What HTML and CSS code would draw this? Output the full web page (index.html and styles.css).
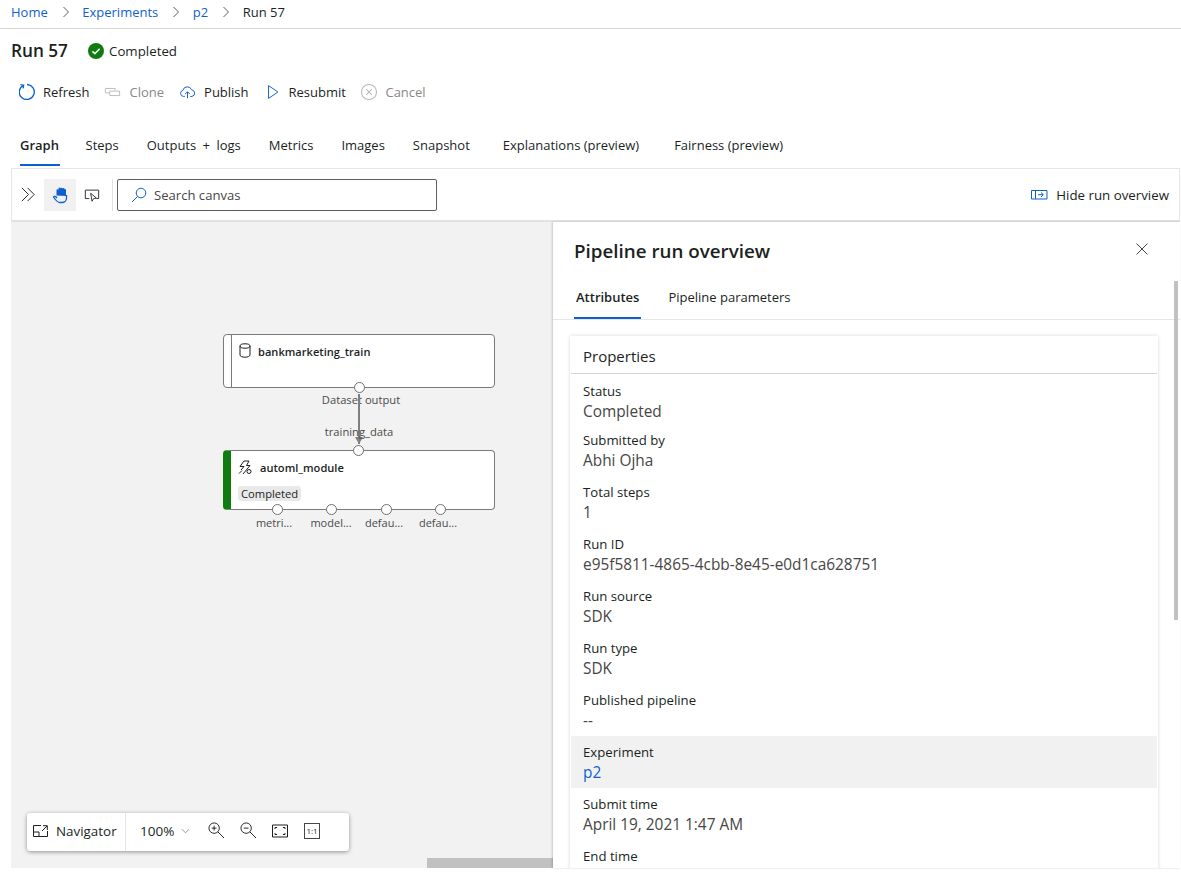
FILE: index.html
```html
<!DOCTYPE html>
<html lang="en">
<head>
<meta charset="utf-8">
<title>Run 57</title>
<link rel="stylesheet" href="styles.css">
</head>
<body>
<nav class="crumbs">
  <a class="link">Home</a>
  <svg class="chev" viewBox="0 0 8 12"><path d="M1.500 1l5 5-5 5"/></svg>
  <a class="link">Experiments</a>
  <svg class="chev" viewBox="0 0 8 12"><path d="M1.500 1l5 5-5 5"/></svg>
  <a class="link">p2</a>
  <svg class="chev" viewBox="0 0 8 12"><path d="M1.500 1l5 5-5 5"/></svg>
  <span>Run 57</span>
</nav>

<header class="title-row">
  <h1>Run 57</h1>
  <span class="status">
    <svg class="check" viewBox="0 0 16 16"><circle cx="8" cy="8" r="8"/><path d="M4.400 8.300l2.500 2.400 4.700-5"/></svg>
    Completed
  </span>
</header>

<div class="commands">
  <button class="cmd"><svg viewBox="1 1 16 16" class="ic blue thick"><path d="M5.400 2.300A7.500 7.500 0 1 0 9 1.500"/><path d="M2.400 1.700l3.300.5-.6 3.200"/></svg>Refresh</button>
  <button class="cmd off"><svg viewBox="0 0 18 18" class="ic ghost wide"><path d="M1 5h11v2M1 5v5h5M6 8h11v5H6z"/></svg>Clone</button>
  <button class="cmd"><svg viewBox="0 0 18 18" class="ic blue wide"><path d="M6 14H4.500a3.500 3.500 0 0 1-.6-6.900 5 5 0 0 1 9.600-.6 3.800 3.800 0 0 1 .5 7.500H12"/><path d="M9 16V9M6.500 11.200L9 8.700l2.500 2.500"/></svg>Publish</button>
  <button class="cmd"><svg viewBox="0 0 18 18" class="ic blue"><path d="M4 1.800v14.400L14.500 9z"/></svg>Resubmit</button>
  <button class="cmd off"><svg viewBox="1 1 16 16" class="ic ghost"><circle cx="9" cy="9" r="7.500"/><path d="M6.200 6.200l5.600 5.600M11.800 6.200l-5.600 5.600"/></svg>Cancel</button>
</div>

<div class="tabs">
  <a class="tab on">Graph</a>
  <a class="tab">Steps</a>
  <a class="tab spaced">Outputs + logs</a>
  <a class="tab">Metrics</a>
  <a class="tab">Images</a>
  <a class="tab">Snapshot</a>
  <a class="tab far">Explanations (preview)</a>
  <a class="tab farther">Fairness (preview)</a>
</div>

<main class="work">
  <div class="toolbar">
    <svg class="tool-ic expand" viewBox="0 0 18 18"><path d="M2 2l7 7-7 7M8 2l7 7-7 7"/></svg>
    <span class="hand"><svg viewBox="0 0 16 18"><path class="hand-fill" d="M4.500 9.500V4.500a1 1 0 0 1 2-.3V2.500a1 1 0 0 1 2 0 1 1 0 0 1 2 .3 1 1 0 0 1 2 .5 1 1 0 0 1 1.500.7V10z"/><path class="hand-line" d="M14.500 9v3a4.500 4.500 0 0 1-4.500 4.500H8C5.500 16.500 3.500 14 1.500 11c.8-1 2.200-.8 3.500 1"/></svg></span>
    <svg class="tool-ic select" viewBox="0 0 18 18"><path d="M6 13H1.500V3.500h15V13H14"/><path d="M7.500 7l1.500 9 2-3 3-.5z"/></svg>
    <span class="sep"></span>
    <label class="search">
      <svg viewBox="0 0 16 16"><circle cx="10" cy="6" r="4.800"/><path d="M6.500 9.500L1 15"/></svg>
      Search canvas
    </label>
    <button class="hide">
      <svg viewBox="0 0 17 10"><path class="hb" d="M.5.500h15.500v8.500H.5zM4.500.500v8.500"/><path class="hb" d="M7 4.700h5M10 2.500l2.300 2.200L10 7"/></svg>
      Hide run overview
    </button>
  </div>

  <div class="split">
    <section class="canvas">
      <div class="node data">
        <svg class="node-ic" viewBox="0 0 12 15"><ellipse cx="6" cy="3" rx="5" ry="2.200"/><path d="M1 3v9c0 1.300 2.200 2.200 5 2.200s5-.9 5-2.200V3"/></svg>
        <b>bankmarketing_train</b>
        <i class="port pd"></i>
      </div>
      <span class="plabel dataset">Dataset output</span>
      <span class="wire"></span>
      <span class="plabel training">training_data</span>

      <div class="node auto">
        <svg class="node-ic flash" viewBox="0 0 14 15"><path d="M6 1L2 6.500h4L3 10M6 1h5L8.500 5.500H12L5 14"/><circle cx="11" cy="11.500" r="2"/><path d="M1 13.500l3-3"/></svg>
        <b>automl_module</b>
        <span class="pill">Completed</span>
        <i class="port pa"></i>
        <i class="port p1"></i>
        <i class="port p2"></i>
        <i class="port p3"></i>
        <i class="port p4"></i>
      </div>
      <span class="plabel out o1">metri...</span>
      <span class="plabel out o2">model...</span>
      <span class="plabel out o3">defau...</span>
      <span class="plabel out o4">defau...</span>

      <div class="navbar">
        <span class="nav-left">
          <svg viewBox="0 0 15 12"><path d="M8 .5H.5v11h14V6M.5 7H6v4.500M9 6l5-5M10 .7h4.300V5"/></svg>
          Navigator
        </span>
        <span class="zoom-pct">100% <svg viewBox="0 0 10 6"><path d="M1 1l4 4 4-4"/></svg></span>
        <svg class="nz" viewBox="0 0 18 18"><circle cx="6.500" cy="6.500" r="5.500"/><path d="M10.500 10.500L17 17M4 6.500h5M6.500 4v5"/></svg>
        <svg class="nz" viewBox="0 0 18 18"><circle cx="6.500" cy="6.500" r="5.500"/><path d="M10.500 10.500L17 17M4 6.500h5"/></svg>
        <svg class="nz fit" viewBox="0 0 16 14"><path d="M.5 1h15v12H.5zM3 5V3.500h2M11 3.500h2V5M13 9v1.500h-2M5 10.500H3V9"/></svg>
        <span class="one">1:1</span>
      </div>
      <span class="hscroll"></span>
    </section>

    <aside class="panel">
      <div class="panel-head">
        <h2>Pipeline run overview</h2>
        <svg class="close" viewBox="0 0 12 12"><path d="M.5.500l11 11M11.500.500l-11 11"/></svg>
      </div>
      <div class="panel-tabs">
        <a class="ptab on">Attributes</a>
        <a class="ptab">Pipeline parameters</a>
      </div>
      <div class="card">
        <h3>Properties</h3>
        <dl class="props">
          <div class="prop first"><dt>Status</dt><dd>Completed</dd></div>
          <div class="prop"><dt>Submitted by</dt><dd>Abhi Ojha</dd></div>
          <div class="prop"><dt>Total steps</dt><dd>1</dd></div>
          <div class="prop"><dt>Run ID</dt><dd>e95f5811-4865-4cbb-8e45-e0d1ca628751</dd></div>
          <div class="prop"><dt>Run source</dt><dd>SDK</dd></div>
          <div class="prop"><dt>Run type</dt><dd>SDK</dd></div>
          <div class="prop"><dt>Published pipeline</dt><dd>--</dd></div>
          <div class="prop hl"><dt>Experiment</dt><dd class="link">p2</dd></div>
          <div class="prop"><dt>Submit time</dt><dd>April 19, 2021 1:47 AM</dd></div>
          <div class="prop"><dt>End time</dt></div>
        </dl>
      </div>
      <span class="vscroll"></span>
    </aside>
  </div>
</main>
</body>
</html>
```
FILE: styles.css
```css
* { box-sizing: border-box; }
html, body { margin: 0; height: 880px; overflow: hidden; background: #fff; }
body { font-family: "Open Sans", "Noto Sans", sans-serif; font-size: 13px; color: #201f1e; }
svg { fill: none; stroke: currentColor; flex: none; }
button { font: inherit; color: inherit; background: none; border: 0; padding: 0; display: flex; align-items: center; }
.link { color: #0f5fd0; }

.crumbs { height: 29px; border-bottom: 1px solid #d8d8d8; padding: 0 0 4px 11px; display: flex; align-items: center; }
.chev { width: 8px; height: 12px; color: #605e5c; margin: 0 12.500px 0 14px; stroke-width: 1; }

.title-row { height: 45px; padding: 0 0 2px 11px; display: flex; align-items: center; }
h1 { margin: 0; font-size: 17.200px; font-weight: 600; color: #201f1e; width: 77px; }
.status { display: flex; align-items: center; gap: 5px; font-size: 13.300px; }
.check { width: 16px; height: 16px; stroke: none; fill: #107c10; }
.check path { stroke: #fff; stroke-width: 1.600; fill: none; }

.commands { height: 36px; padding-left: 19px; display: flex; align-items: center; }
.cmd { margin-right: 15px; gap: 8px; white-space: nowrap; }
.cmd:nth-child(3) { margin-right: 16px; }
.cmd:last-child { gap: 8.500px; }
.cmd.off { color: #8a8886; }
.ic { width: 16px; height: 16px; stroke-width: 1.100; }
.ic.wide { width: 17px; }
.ic.thick { stroke-width: 1.300; }
.blue { color: #0f5fd0; }
.ghost { color: #bdbbb9; }

.tabs { height: 43px; padding-left: 20px; display: flex; gap: 28px; margin-top: 15px; }
.tab { height: 41px; padding: 11px 0 0; line-height: 18px; white-space: nowrap; }
.tab.on { font-weight: 600; border-bottom: 2px solid #0f5fd0; width: 40px; margin-right: -2.500px; }
.tab.spaced { word-spacing: 3px; }
.tab.far { margin-left: 5px; }
.tab.farther { margin-left: 7px; }

.work { margin: 0 1px 0 11px; }
.toolbar { height: 54px; border: 1px solid #e6e6e6; border-bottom: 2px solid #e2e2e2; display: flex; align-items: center; padding: 0 10px 0 8px; }
.tool-ic { width: 16px; height: 16px; stroke-width: 1; }
.expand { width: 17px; height: 17px; }
.hand { width: 32px; height: 32px; margin: 0 8px 0 7px; background: #f1f1f1; display: flex; align-items: center; justify-content: center; color: #0f5fd0; }
.hand svg { width: 16px; height: 18px; }
.hand-fill { fill: #0f5fd0; stroke: none; }
.hand-line { stroke-width: 1.300; }
.sep { width: 1px; height: 32px; background: #e1e1e1; margin: 0 4px 0 12px; }
.search { width: 320px; height: 32px; border: 1px solid #605e5c; border-radius: 2px; display: flex; align-items: center; gap: 7px; padding-left: 13px; color: #484644; font-size: 13.100px; }
.search svg { width: 16px; height: 16px; color: #0f5fd0; stroke-width: 1; }
.hide { margin-left: auto; gap: 8px; font-size: 13.300px; }
.hide svg { width: 17px; height: 10px; }
.hb { stroke: #0f5fd0; stroke-width: 1; }

.split { height: 646px; display: flex; }
.canvas { width: 542px; background: #f2f2f2; position: relative; overflow: hidden; }
.node { position: absolute; left: 212px; width: 272px; background: #fff; border: 1px solid #7a7a7a; border-radius: 4px; font-size: 11.100px; }
.node b { font-weight: 600; color: #201f1e; position: absolute; white-space: nowrap; }
.node-ic { position: absolute; width: 12px; color: #201f1e; stroke-width: 1; }
.data { top: 112px; height: 54px; }
.data::before { content: ""; position: absolute; left: 7px; top: 0; bottom: 0; border-left: 1px solid #7a7a7a; }
.data b { left: 34px; top: 9px; }
.data .node-ic { left: 15px; top: 8px; height: 15px; }
.auto { top: 228px; height: 60px; border-left: 8px solid #107c10; }
.auto b { left: 29px; top: 9px; }
.auto .node-ic { left: 7px; top: 9px; height: 15px; width: 14px; }
.pill { position: absolute; left: 7px; top: 35px; height: 15px; padding: 0 3px; line-height: 15px; background: #e9e9e9; border-radius: 3px; white-space: nowrap; font-size: 11.200px; }
.port { position: absolute; width: 11px; height: 11px; border: 1px solid #6f6f6f; background: #fff; border-radius: 50%; z-index: 2; }
.pd { left: 130px; top: 47px; }
.pa { left: 122px; top: -6px; }
.p1 { left: 41px; top: 53px; }
.p2 { left: 95px; top: 53px; }
.p3 { left: 150px; top: 53px; }
.p4 { left: 204px; top: 53px; }
.plabel { position: absolute; font-size: 11.200px; color: #4c4a48; line-height: 15px; white-space: nowrap; transform: translateX(-50%); }
.dataset { left: 350px; top: 170px; }
.training { left: 348px; top: 202px; }
.wire { position: absolute; left: 347px; top: 172px; height: 50px; width: 2px; background: #7f7f7f; }
.wire::after { content: ""; position: absolute; left: -3px; bottom: 0; border: 4px solid transparent; border-top: 7px solid #7f7f7f; border-bottom: 0; }
.out { top: 293px; font-size: 11px; }
.o1 { left: 263px; }
.o2 { left: 320px; }
.o3 { left: 373px; }
.o4 { left: 427px; }
.navbar { position: absolute; left: 16px; top: 591px; width: 322px; height: 38px; background: #fff; border-radius: 3px; box-shadow: 0 1px 4px rgba(0,0,0,.4); display: flex; align-items: center; }
.navbar > * { margin-bottom: 3px; }
.navbar > .nav-left { margin-bottom: 0; padding-bottom: 3px; width: 99px; height: 100%; border-right: 1px solid #e6e6e6; display: flex; align-items: center; gap: 8px; padding-left: 6px; white-space: nowrap; font-size: 13.400px; }
.nav-left svg { width: 15px; height: 12px; stroke-width: 1; }
.zoom-pct { width: 82px; display: flex; align-items: center; gap: 7px; padding-left: 14px; font-size: 13.500px; }
.zoom-pct svg { width: 9px; height: 6px; color: #8a8886; stroke-width: 1; }
.nz { width: 17px; height: 17px; margin-right: 15px; stroke-width: 1; }
.fit { width: 16px; height: 14px; margin-right: 16px; }
.one { width: 16px; height: 16px; border: 1px solid #484644; font-size: 8px; line-height: 14px; text-align: center; }
.hscroll { position: absolute; left: 416px; right: 0; bottom: 0; height: 10px; background: #c1c1c1; }

.panel { width: 627px; position: relative; box-shadow: -1px 0 2px rgba(0,0,0,.18); background: #fff; overflow: hidden; }
.panel-head { height: 59px; padding: 17px 21px 0; display: flex; justify-content: space-between; }
h2 { margin: 0; font-size: 18.800px; font-weight: 600; line-height: 24px; }
.close { width: 12px; height: 12px; margin: 4px 11px 0 0; color: #484644; stroke-width: 1; }
.panel-tabs { height: 39px; border-bottom: 1px solid #e6e6e6; padding-left: 21px; display: flex; gap: 27px; }
.ptab { height: 38px; padding-top: 8px; line-height: 17px; }
.ptab.on { font-weight: 600; border-bottom: 2px solid #0f5fd0; padding-left: 2px; padding-right: 2px; }
.card { margin: 16px 22px 0 17px; box-shadow: 0 0 4px rgba(0,0,0,.16); height: 600px; padding: 0 1px; }
h3 { margin: 0; height: 38px; border-bottom: 1px solid #d6d6d6; font-size: 15px; font-weight: 400; padding: 10px 0 0 12px; line-height: 20px; }
.props { margin: 0; }
.prop { height: 52px; padding: 6px 12px 0; }
.prop dt { line-height: 20px; font-size: 13.200px; }
.prop.first { height: 50px; padding-top: 8px; }
.prop.first dt { line-height: 19px; }
.prop dd { margin: 0; font-size: 15.400px; line-height: 22px; color: #484644; }
.prop dd.link { color: #0f5fd0; }
.hl { background: #f1f1f1; }
.vscroll { position: absolute; right: 2px; top: 59px; width: 4px; height: 339px; background: #c1c1c1; }
```
